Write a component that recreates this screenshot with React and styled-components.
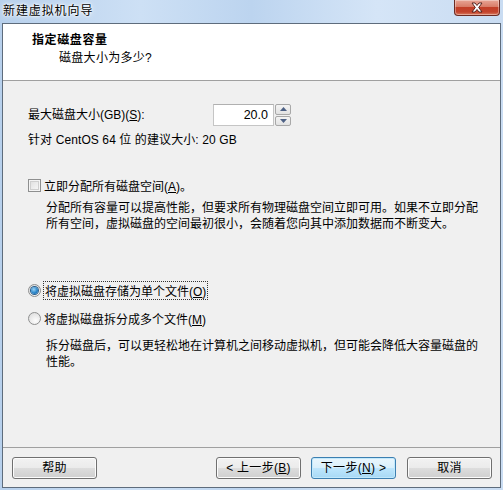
import React from 'react';
import styled, { createGlobalStyle } from 'styled-components';

const Global = createGlobalStyle`
  html, body { margin: 0; padding: 0; }
  body {
    width: 503px; height: 490px; overflow: hidden;
    font-family: "Liberation Sans", "Noto Sans CJK SC", sans-serif;
    font-size: 12px; color: #000;
  }
`;

const Window = styled.div`
  width: 503px; height: 490px; box-sizing: border-box;
  padding: 0 2px 2px 2px;
  display: flex; flex-direction: column;
  background: linear-gradient(to right, #b7d0ec 0%, #cde0f5 28%, #bcd4ef 50%, #d5e5f7 75%, #c9dcf2 100%);
`;

const TitleBar = styled.div`
  height: 23px; flex: none;
  display: flex; justify-content: space-between; align-items: flex-start;
`;

const TitleText = styled.div`
  padding: 3px 0 0 1px;
  line-height: 16px; font-size: 12px;
  text-shadow: 0 0 6px #fff, 0 0 3px #fff, 0 0 2px #fff;
  letter-spacing: 0.9px;
`;

const CloseBtn = styled.div`
  width: 46px; height: 16px; box-sizing: border-box; margin-right: 1px;
  border: 1px solid #6b2a22; border-top: none;
  border-radius: 0 0 4px 4px;
  background: linear-gradient(to bottom, #e8a595 0%, #d87c68 45%, #c23f28 50%, #c3432c 80%, #da7e62 100%);
  box-shadow: inset 0 0 0 1px rgba(255,255,255,0.35);
  display: flex; align-items: center; justify-content: center;
`;

const Client = styled.div`
  flex: 1; display: flex; flex-direction: column;
  border: 1px solid #5e6c7c;
  background: #f0f0f0;
`;

const Header = styled.div`
  height: 48px; flex: none;
  background: #fff;
  border-bottom: 1px solid #a0a0a0;
  padding: 8px 0 0 29px; box-sizing: content-box;
`;

const HeaderTitle = styled.div`
  font-weight: bold; line-height: 16px; letter-spacing: 0.6px;
`;

const HeaderSub = styled.div`
  line-height: 16px; margin: 2px 0 0 27px; letter-spacing: 0.3px;
`;

const Body = styled.div`
  flex: 1; padding: 23px 0 0 25px;
`;

const SpinRow = styled.div`
  display: flex; align-items: center; height: 22px;
`;

const FieldLabel = styled.div`
  width: 185px; line-height: 16px;
`;

const SpinBox = styled.div`
  display: flex; height: 22px; width: 78px;
`;

const SpinInput = styled.div`
  width: 61px; height: 22px; box-sizing: border-box;
  border: 1px solid #c5c5c5; border-top-color: #b0b0b0;
  background: #fff;
  text-align: right; padding-right: 5px;
  line-height: 20px; font-size: 12.5px;
`;

const SpinButtons = styled.div`
  width: 16px; margin-left: 1px;
  display: flex; flex-direction: column; gap: 1px;
`;

const SpinBtn = styled.div`
  flex: 1; box-sizing: border-box;
  border: 1px solid #a8a8a8; border-radius: 2px;
  background: linear-gradient(to bottom, #f4f4f4, #e2e2e2);
  display: flex; align-items: center; justify-content: center;
`;

const Line = styled.div`
  line-height: 16px; margin-top: ${p => p.$mt || 0}px; white-space: nowrap;
  letter-spacing: 0.1px;
`;

const OptionRow = styled.div`
  display: flex; align-items: center; gap: 3px; height: 16px;
  margin-top: ${p => p.$mt || 0}px;
`;

const CheckBox = styled.div`
  width: 13px; height: 13px; box-sizing: border-box; flex: none;
  border: 1px solid #8e8f8f;
  background: linear-gradient(135deg, #dcdcdc, #fbfbfb);
  box-shadow: inset 0 0 0 1px #f4f4f4, inset 0 0 0 2px #cfcfcf;
`;

const Radio = styled.div`
  width: 13px; height: 13px; box-sizing: border-box; flex: none;
  border-radius: 50%;
  border: 1px solid #8e8f8f;
  background: radial-gradient(circle at 60% 70%, #fdfdfd 0%, #e0e0e0 80%);
  display: flex; align-items: center; justify-content: center;
`;

const RadioDot = styled.div`
  width: 7px; height: 7px; border-radius: 50%;
  background: radial-gradient(circle at 40% 35%, #9cd4f6 0%, #2b86c9 55%, #0e5fa6 100%);
  box-shadow: 0 0 0 1px #2a5d8a;
`;

const Focus = styled.span`
  outline: 1px dotted #333; outline-offset: 0px; padding: 0 1px;
`;

const Desc = styled.div`
  margin: ${p => p.$mt || 0}px 0 0 18px;
  line-height: 16px; white-space: nowrap; letter-spacing: 0px;
`;

const U = styled.span`
  text-decoration: underline;
`;

const Footer = styled.div`
  flex: none;
  border-top: 1px solid #a0a0a0;
  padding: 9px 8px 0 9px; box-sizing: border-box; height: 40px;
  display: flex; align-items: flex-start; gap: 10px;
`;

const Button = styled.div`
  width: 85px; height: 22px; box-sizing: border-box;
  border: 1px solid ${p => (p.$default ? '#3c7fb1' : '#707070')};
  border-radius: 3px;
  background: ${p => p.$default
    ? 'linear-gradient(to bottom, #eaf6fd 0%, #d9f0fc 50%, #bee6fd 51%, #a7d9f5 100%)'
    : 'linear-gradient(to bottom, #f2f2f2 0%, #ebebeb 50%, #dddddd 51%, #cfcfcf 100%)'};
  box-shadow: inset 0 0 0 1px ${p => (p.$default ? '#c2e9fc' : '#fcfcfc')};
  display: flex; align-items: center; justify-content: center;
  line-height: 16px; letter-spacing: 0.3px;
  margin-right: ${p => (p.$push ? 'auto' : p.$default ? '1px' : '0')};
`;

const CloseIcon = () => (
  <svg width="14" height="11" viewBox="0 0 14 11">
    <path d="M2 1 L5 1 L7 3.5 L9 1 L12 1 L8.7 5.5 L12 10 L9 10 L7 7.5 L5 10 L2 10 L5.3 5.5 Z"
      fill="#fff" stroke="#4a1a14" strokeWidth="0.9" strokeLinejoin="round" />
  </svg>
);

const Arrow = ({ up }) => (
  <svg width="7" height="4" viewBox="0 0 7 4">
    <path d={up ? 'M0 4 L3.5 0 L7 4 Z' : 'M0 0 L7 0 L3.5 4 Z'} fill="#4d6185" />
  </svg>
);

export default function App() {
  return (
    <>
      <Global />
      <Window>
        <TitleBar>
          <TitleText>新建虚拟机向导</TitleText>
          <CloseBtn><CloseIcon /></CloseBtn>
        </TitleBar>
        <Client>
          <Header>
            <HeaderTitle>指定磁盘容量</HeaderTitle>
            <HeaderSub>磁盘大小为多少?</HeaderSub>
          </Header>
          <Body>
            <SpinRow>
              <FieldLabel>最大磁盘大小(GB)(<U>S</U>):</FieldLabel>
              <SpinBox>
                <SpinInput>20.0</SpinInput>
                <SpinButtons>
                  <SpinBtn><Arrow up /></SpinBtn>
                  <SpinBtn><Arrow /></SpinBtn>
                </SpinButtons>
              </SpinBox>
            </SpinRow>
            <Line $mt={6}>针对 CentOS 64 位 的建议大小: 20 GB</Line>

            <OptionRow $mt={29}>
              <CheckBox />
              <span>立即分配所有磁盘空间(<U>A</U>)。</span>
            </OptionRow>
            <Desc $mt={7}>
              分配所有容量可以提高性能，但要求所有物理磁盘空间立即可用。如果不立即分配<br />
              所有空间，虚拟磁盘的空间最初很小，会随着您向其中添加数据而不断变大。
            </Desc>

            <OptionRow $mt={50}>
              <Radio><RadioDot /></Radio>
              <Focus>将虚拟磁盘存储为单个文件(<U>O</U>)</Focus>
            </OptionRow>
            <OptionRow $mt={12}>
              <Radio />
              <span>将虚拟磁盘拆分成多个文件(<U>M</U>)</span>
            </OptionRow>
            <Desc $mt={12}>
              拆分磁盘后，可以更轻松地在计算机之间移动虚拟机，但可能会降低大容量磁盘的<br />
              性能。
            </Desc>
          </Body>
          <Footer>
            <Button $push>帮助</Button>
            <Button>&lt; 上一步(<U>B</U>)</Button>
            <Button $default>下一步(<U>N</U>) &gt;</Button>
            <Button>取消</Button>
          </Footer>
        </Client>
      </Window>
    </>
  );
}
